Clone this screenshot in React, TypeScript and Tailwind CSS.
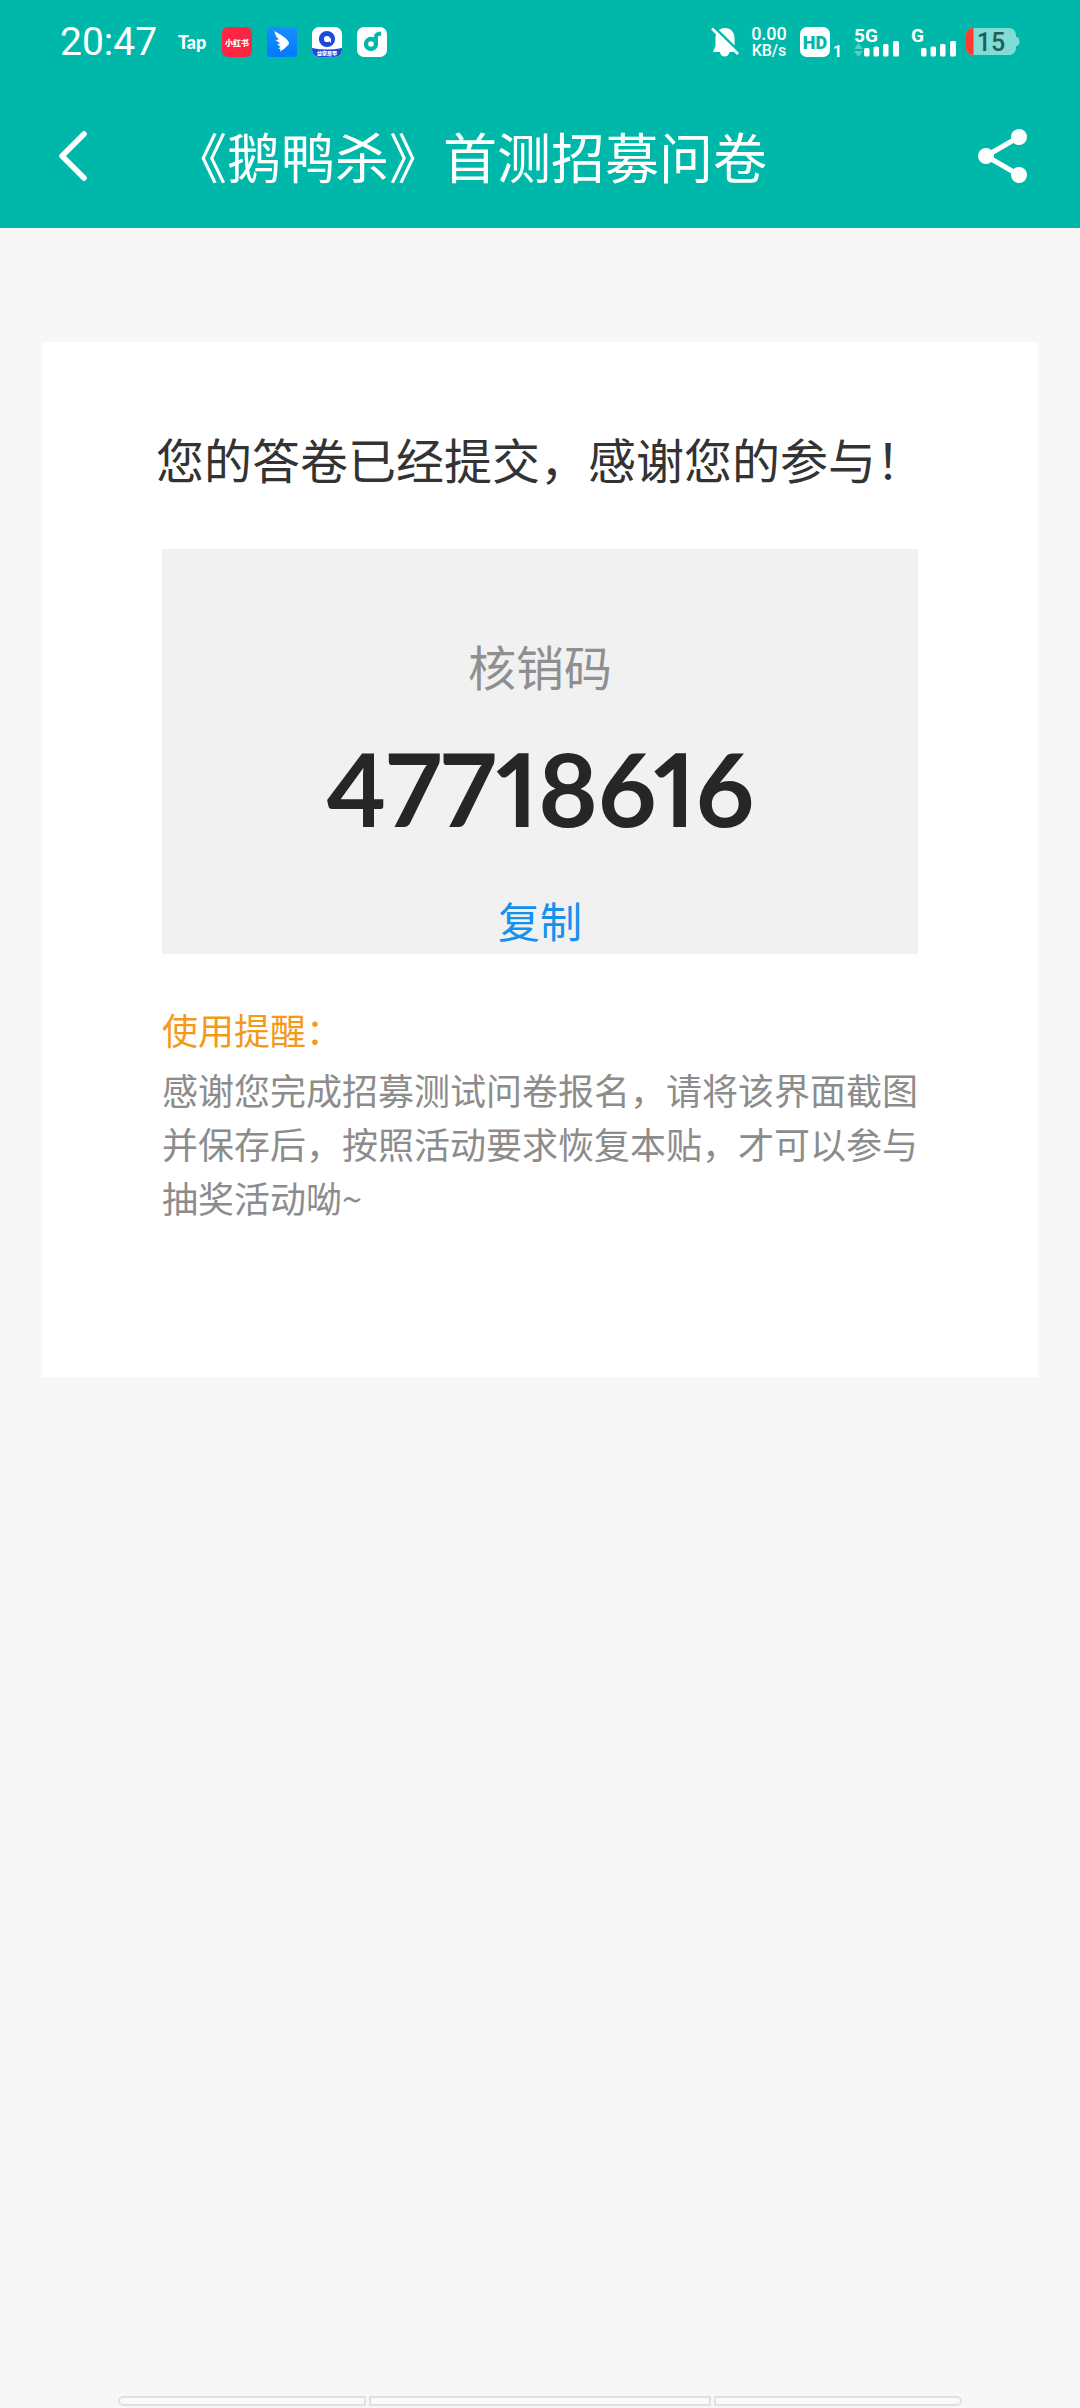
import { useState } from 'react'

const CODE = '47718616'

function AppIcons() {
  return (
    <div className="ml-5 flex items-center gap-[15px]">
      <span className="w-[30px] text-center font-[Lato] text-[18px] leading-5 font-black">Tap</span>

      <svg className="size-[30px]" viewBox="0 0 30 30">
        <rect width="30" height="30" rx="6" fill="#ff2442" />
        <text x="15" y="18.500" fontSize="8" fontWeight="900" textAnchor="middle" fill="#fff">小红书</text>
      </svg>

      <svg className="size-[30px]" viewBox="0 0 30 30">
        <defs>
          <linearGradient id="wing" x1="0" y1="0" x2="0" y2="1">
            <stop offset="0" stopColor="#1b8dff" />
            <stop offset="1" stopColor="#007bff" />
          </linearGradient>
        </defs>
        <rect width="30" height="30" rx="3" fill="url(#wing)" />
        <path d="M7.5 4 C13 7.500 18 9.500 21.500 14.500 L22 17 L17.500 21.500 L13 24.500 L13.500 22 L11.500 21.500 L13.500 19.500 L10 17.500 L13 16.500 L8.500 13 L12 12.500 C9 10 8 7 7.500 4 Z" fill="#fff" />
      </svg>

      <svg className="size-[30px]" viewBox="0 0 30 30">
        <defs>
          <clipPath id="round">
            <rect width="30" height="30" rx="7" />
          </clipPath>
        </defs>
        <g clipPath="url(#round)">
          <rect width="30" height="30" fill="#fff" />
          <path d="M0 21 Q15 24 30 21 V30 H0 Z" fill="#1f49de" />
        </g>
        <circle cx="15" cy="12" r="5.600" fill="none" stroke="#1f49de" strokeWidth="5" />
        <path d="M14.500 11.500 H19 V16 Z" fill="#fff" />
        <text x="15" y="28" fontSize="5" fontWeight="900" textAnchor="middle" fill="#fff">益家居甲</text>
      </svg>

      <svg className="size-[30px]" viewBox="0 0 30 30">
        <rect width="30" height="30" rx="7" fill="#fff" />
        <circle cx="14" cy="17" r="5" fill="none" stroke="#00b8a9" strokeWidth="4.400" />
        <path d="M19 17 V9.500 Q19 7 24 6.500" fill="none" stroke="#00b8a9" strokeWidth="4" />
      </svg>
    </div>
  )
}

function Bars() {
  return (
    <g fill="#fff">
      <rect x="10" y="21" width="5.500" height="8.500" rx="1.500" />
      <rect x="19.500" y="19.500" width="5.500" height="10" rx="1.500" />
      <rect x="29" y="17" width="5.500" height="12.500" rx="1.500" />
      <rect x="39" y="14" width="6" height="15.500" rx="1.500" />
    </g>
  )
}

function StatusBar() {
  return (
    <div className="flex h-[84px] items-center px-[60px] font-[Roboto,'Noto_Sans_CJK_SC',sans-serif]">
      <span className="text-[39px] leading-10">20:47</span>
      <AppIcons />

      <div className="ml-auto flex items-center">
        <svg className="h-[30px] w-[28px]" viewBox="0 0 28 30">
          <path d="M14 1 C19.500 1 23.500 5 23.500 11 V19 L26 25 H18.500 C18 28 16 29.500 13.500 29.500 C11 29.500 9.500 28 9 25 H2 L4.500 19 V11 C4.500 5 8.500 1 14 1 Z" fill="#fff" />
          <path d="M3 0 L29 25.500" stroke="#00b8a9" strokeWidth="2.500" />
          <path d="M1 1.500 L27 27" stroke="#fff" strokeWidth="2.600" />
        </svg>

        <div className="ml-[10px] w-[40px] text-center font-medium">
          <div className="text-[18px] leading-[17px]">0.00</div>
          <div className="text-[16px] leading-[17px]">KB/s</div>
        </div>

        <svg className="ml-[11px] h-[30px] w-[43px] overflow-visible" viewBox="0 0 43 30">
          <rect width="30" height="30" rx="7" fill="#fff" />
          <text x="15" y="21.500" fontSize="18" fontWeight="900" textAnchor="middle" fill="#00b8a9">HD</text>
          <text x="33" y="29.500" fontSize="16" fontWeight="700" fill="#fff">1</text>
        </svg>

        <svg className="ml-[11px] h-[30px] w-[47px] overflow-visible" viewBox="0 0 47 30">
          <text x="0" y="14.500" fontSize="19" fontWeight="700" fill="#fff">5G</text>
          <path d="M0 22 L4.500 16 L9 22 Z M0 24 L4.500 30 L9 24 Z" fill="#55cfc4" />
          <Bars />
        </svg>

        <svg className="ml-[10px] h-[30px] w-[47px] overflow-visible" viewBox="0 0 47 30">
          <text x="0" y="14.500" fontSize="19" fontWeight="700" fill="#fff">G</text>
          <Bars />
        </svg>

        <svg className="ml-[8px] h-[28px] w-[54px]" viewBox="0 0 54 28">
          <defs>
            <clipPath id="cell">
              <rect width="50" height="27" rx="7" />
            </clipPath>
          </defs>
          <g clipPath="url(#cell)">
            <rect width="50" height="27" fill="#80dcd4" />
            <rect width="7.500" height="27" fill="#ff3b30" />
          </g>
          <path d="M50 9 Q53.500 9 53.500 13.500 Q53.500 18 50 18 Z" fill="#80dcd4" />
          <text x="25" y="22.500" fontSize="25" fontWeight="500" textAnchor="middle" fill="#1f5f5a">15</text>
        </svg>
      </div>
    </div>
  )
}

function TitleBar() {
  return (
    <div className="flex h-[144px] items-center px-[53px]">
      <button aria-label="返回">
        <svg className="h-[54px] w-9" viewBox="0 0 36 54">
          <path d="M31 5 L9 27 L31 49" fill="none" stroke="#fff" strokeWidth="5.500" strokeLinecap="round" strokeLinejoin="round" />
        </svg>
      </button>
      <h1 className="ml-[84px] text-[54px] leading-[72px]">《鹅鸭杀》首测招募问卷</h1>
      <button aria-label="分享" className="ml-auto">
        <svg className="h-[54px] w-[49px]" viewBox="0 0 49 54">
          <path d="M41 8 L8 27 L41 46" fill="none" stroke="#fff" strokeWidth="5" />
          <circle cx="41" cy="8" r="8" fill="#fff" />
          <circle cx="8" cy="27" r="8" fill="#fff" />
          <circle cx="41" cy="46" r="8" fill="#fff" />
        </svg>
      </button>
    </div>
  )
}

export default function App() {
  const [copied, setCopied] = useState(false)

  const copy = () => {
    navigator.clipboard?.writeText(CODE)
    setCopied(true)
  }

  return (
    <div className="flex min-h-screen flex-col bg-[#f7f7f7] font-['Noto_Sans_CJK_SC',sans-serif]">
      <header className="bg-[#00b8a9] text-white">
        <StatusBar />
        <TitleBar />
      </header>

      <main className="mx-[42px] mt-[114px] bg-white px-[114px] pt-20 pb-[153px]">
        <h2 className="text-center text-5xl leading-[72px] text-[#333]">您的答卷已经提交，感谢您的参与！</h2>

        {/* Redemption code */}
        <section className="mx-[6px] mt-[55px] flex flex-col items-center bg-[#f1f1f1] pt-20 pb-[3px]">
          <p className="text-5xl leading-[72px] text-[#8f8f8f]">核销码</p>
          <p className="mt-6 font-[Lato] text-[102px] leading-[126px] font-bold text-[#262626] proportional-nums">{CODE}</p>
          <button onClick={copy} className="mt-[37px] text-[42px] leading-[63px] text-[#1490ee]">
            {copied ? '已复制' : '复制'}
          </button>
        </section>

        {/* Usage note */}
        <section className="mx-[6px] mt-12 text-4xl leading-[54px] text-[#8c8c8c]">
          <h3 className="mb-[6px] text-[#f39a1b]">使用提醒：</h3>
          <p>感谢您完成招募测试问卷报名，请将该界面截图并保存后，按照活动要求恢复本贴，才可以参与抽奖活动呦~</p>
        </section>
      </main>

      <footer className="mx-[118px] mt-auto mb-[2px] flex gap-[3px]">
        <div className="h-[10px] w-[248px] rounded-l-full border-2 border-[#e0e0e0] bg-[#fafafa]"></div>
        <div className="h-[10px] flex-1 border-2 border-[#e0e0e0] bg-[#fafafa]"></div>
        <div className="h-[10px] w-[248px] rounded-r-full border-2 border-[#e0e0e0] bg-[#fafafa]"></div>
      </footer>
    </div>
  )
}
